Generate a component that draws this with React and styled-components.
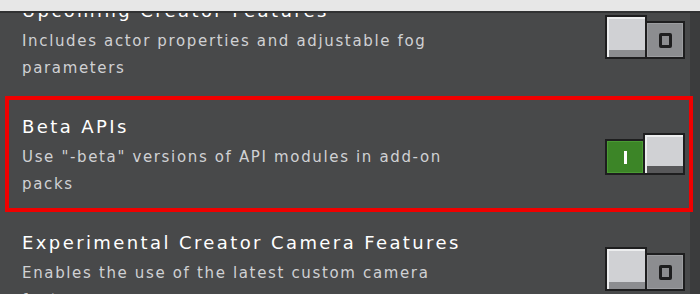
import React from "react";
import styled, { createGlobalStyle } from "styled-components";

const Global = createGlobalStyle`
  html, body { margin: 0; padding: 0; background: #48494a; overflow: hidden; }
  body { font-family: "DejaVu Sans", "Liberation Sans", sans-serif; }
`;

const Page = styled.div`
  width: 700px;
  height: 294px;
  display: flex;
  flex-direction: column;
  background: #48494a;
`;

const TopBar = styled.div`
  height: 11px;
  flex: none;
  background: #e7e7e7;
  border-bottom: 2px solid #313233;
`;

const Body = styled.div`
  flex: 1;
  display: flex;
  overflow: hidden;
  min-height: 0;
`;

const List = styled.div`
  flex: 1;
  display: flex;
  flex-direction: column;
`;

const Scroller = styled.div`
  margin-top: -33px;
  display: flex;
  flex-direction: column;
`;

const ScrollTrack = styled.div`
  width: 10px;
  flex: none;
  background: #3b3c3d;
`;

const Row = styled.div`
  position: relative;
  height: 116px;
  flex: none;
  box-sizing: border-box;
  display: flex;
  align-items: center;
  justify-content: space-between;
  padding: 0 5px 0 22px;
  &::after {
    content: "";
    display: ${(p) => (p.$highlighted ? "block" : "none")};
    position: absolute;
    top: 0;
    bottom: 0;
    left: 5px;
    right: -3px;
    border: 4px solid #f00000;
    z-index: 2;
    pointer-events: none;
  }
`;

const Text = styled.div`
  width: 540px;
  align-self: flex-start;
  padding-top: 17px;
`;

const Title = styled.div`
  font-size: 18px;
  line-height: 28px;
  letter-spacing: 2.4px;
  color: #ffffff;
  margin-bottom: 3px;
  white-space: nowrap;
`;

const DescLine = styled.div`
  font-size: 15px;
  line-height: 27px;
  letter-spacing: 1.65px;
  color: #d0d1d4;
  white-space: nowrap;
`;

const Toggle = styled.div`
  display: flex;
  align-items: flex-end;
  width: 80px;
  height: 44px;
  margin-top: -2px;
`;

const Track = styled.div`
  box-sizing: border-box;
  width: 40px;
  height: ${(p) => (p.$on ? "36px" : "38px")};
  border: 2px solid #1e1e1f;
  background: ${(p) => (p.$on ? "#3c8527" : "#8c8d90")};
  box-shadow: inset 0 0 0 1px ${(p) => (p.$on ? "#4a9a33" : "#9c9da0")};
  display: flex;
  align-items: center;
  justify-content: center;
  margin-left: ${(p) => (p.$on ? "0" : "-2px")};
  margin-right: ${(p) => (p.$on ? "-2px" : "0")};
`;

const OnMark = styled.div`
  width: 3px;
  height: 13px;
  background: #ffffff;
`;

const OffMark = styled.div`
  box-sizing: border-box;
  width: 13px;
  height: 15px;
  border: 3px solid #1e1e1f;
  border-radius: 2px;
`;

const Knob = styled.div`
  box-sizing: border-box;
  width: 42px;
  height: ${(p) => (p.$on ? "42px" : "44px")};
  border: 2px solid #1e1e1f;
  background: #d0d1d4;
  box-shadow: inset 2px 2px 0 #ecedee, inset 0 -7px 0 ${(p) => (p.$on ? "#58585a" : "#8c8d90")};
  position: relative;
  z-index: 1;
`;

function Switch({ on }) {
  return (
    <Toggle>
      {on ? (
        <>
          <Track $on>
            <OnMark />
          </Track>
          <Knob $on />
        </>
      ) : (
        <>
          <Knob />
          <Track>
            <OffMark />
          </Track>
        </>
      )}
    </Toggle>
  );
}

const rows = [
  {
    title: "Upcoming Creator Features",
    desc: ["Includes actor properties and adjustable fog", "parameters"],
    on: false,
  },
  {
    title: "Beta APIs",
    desc: ['Use "-beta" versions of API modules in add-on', "packs"],
    on: true,
    highlighted: true,
  },
  {
    title: "Experimental Creator Camera Features",
    desc: ["Enables the use of the latest custom camera", "features"],
    on: false,
  },
];

export default function App() {
  return (
    <Page>
      <Global />
      <TopBar />
      <Body>
        <List>
          <Scroller>
            {rows.map((r) => (
              <Row key={r.title} $highlighted={r.highlighted}>
                <Text>
                  <Title>{r.title}</Title>
                  {r.desc.map((line) => (
                    <DescLine key={line}>{line}</DescLine>
                  ))}
                </Text>
                <Switch on={r.on} />
              </Row>
            ))}
          </Scroller>
        </List>
        <ScrollTrack />
      </Body>
    </Page>
  );
}
